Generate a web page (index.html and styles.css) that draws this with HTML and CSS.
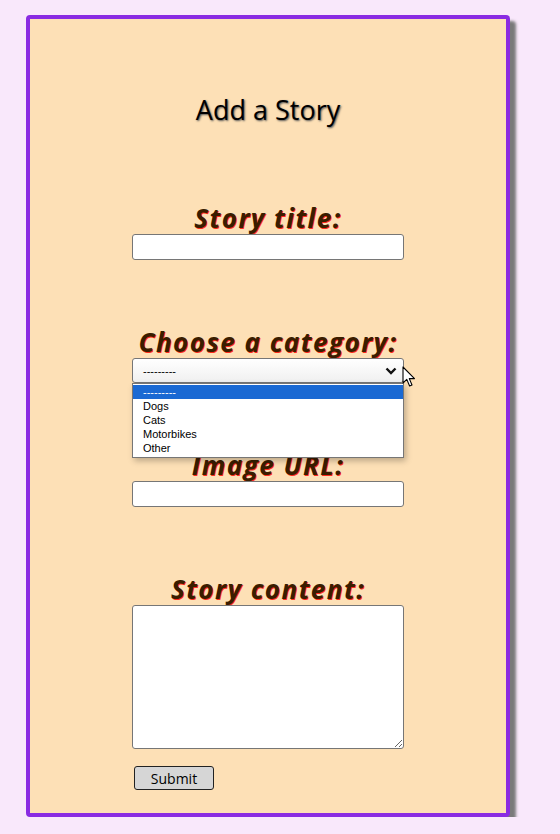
FILE: index.html
```html
<!DOCTYPE html>
<html lang="en">
<head>
<meta charset="utf-8">
<title>Add a Story</title>
<link rel="stylesheet" href="styles.css">
</head>
<body>
<div class="card">
  <h1 class="title">Add a Story</h1>
  <form class="form">
    <div class="field">
      <label class="label" for="t">Story title:</label>
      <input class="input" id="t" type="text">
    </div>
    <div class="field">
      <label class="label" for="c">Choose a category:</label>
      <div class="select-wrap">
        <div class="select" id="c">
          <span class="select-text">---------</span>
          <svg class="chev" width="12" height="8" viewBox="0 0 12 8"><path d="M1.5 1.5 L6 6 L10.5 1.5" fill="none" stroke="#111" stroke-width="2.4"/></svg>
        </div>
        <ul class="dropdown">
          <li class="opt opt-active">---------</li>
          <li class="opt">Dogs</li>
          <li class="opt">Cats</li>
          <li class="opt">Motorbikes</li>
          <li class="opt">Other</li>
        </ul>
        <svg class="cursor" width="14" height="22" viewBox="0 0 14 22"><path d="M1 1 L1 17 L4.8 13.4 L7.6 20 L10 19 L7.3 12.6 L12.5 12.6 Z" fill="#fff" stroke="#000" stroke-width="1.1" stroke-linejoin="round"/></svg>
      </div>
    </div>
    <div class="field">
      <label class="label" for="u">Image URL:</label>
      <input class="input" id="u" type="text">
    </div>
    <div class="field">
      <label class="label" for="s">Story content:</label>
      <textarea class="textarea" id="s"></textarea>
    </div>
    <div class="actions">
      <button class="btn" type="button">Submit</button>
    </div>
  </form>
</div>
</body>
</html>
```
FILE: styles.css
```css
html, body {
  margin: 0;
  padding: 0;
}
body {
  background: #f9e8fb;
  font-family: "Liberation Sans", Arial, sans-serif;
}
.card {
  box-sizing: border-box;
  width: 484px;
  margin: 15px 0 0 26px;
  border: 4px solid #8a2be2;
  border-radius: 4px;
  background: #fde0b6;
  box-shadow: 6px 6px 3px #7a7a7a;
  padding: 75px 0 23px 0;
}
.title {
  margin: 0;
  text-align: center;
  font-family: "Open Sans", sans-serif;
  font-weight: 500;
  font-size: 27px;
  line-height: 31px;
  color: #000;
  text-shadow: 1px 1px 2px #555;
}
.form {
  display: flex;
  flex-direction: column;
  align-items: center;
  margin-top: 79px;
  gap: 68px;
}
.field {
  display: flex;
  flex-direction: column;
  align-items: center;
  width: 272px;
}
.label {
  display: block;
  white-space: nowrap;
  font-family: "Open Sans", sans-serif;
  font-style: italic;
  font-weight: 700;
  font-size: 26px;
  line-height: 28px;
  margin-bottom: 2px;
  letter-spacing: 1.5px;
  color: #3a1d00;
  text-shadow: 1px 1px 0 #ff2a1a;
}
.input {
  box-sizing: border-box;
  width: 272px;
  height: 26px;
  margin: 0;
  border: 1px solid #767676;
  border-radius: 3px;
  background: #fff;
  padding: 1px 2px;
}
.select-wrap {
  position: relative;
  width: 272px;
}
.select {
  box-sizing: border-box;
  width: 272px;
  height: 25px;
  display: flex;
  align-items: center;
  justify-content: space-between;
  padding: 0 6px 0 10px;
  border: 1px solid #767676;
  border-radius: 3px;
  background: linear-gradient(#ffffff, #f0f0f0);
  font-size: 11px;
  color: #000;
}
.chev {
  display: block;
}
.dropdown {
  position: absolute;
  left: 0;
  top: 25px;
  box-sizing: border-box;
  width: 272px;
  margin: 0;
  padding: 1px 0 2px 0;
  list-style: none;
  background: #fff;
  border: 1px solid #767676;
  box-shadow: 2px 3px 6px rgba(0, 0, 0, 0.25);
  z-index: 2;
}
.opt {
  height: 14px;
  line-height: 14px;
  padding-left: 10px;
  font-size: 11px;
  color: #000;
}
.opt-active {
  background: #1a69d3;
  color: #fff;
}
.cursor {
  position: absolute;
  left: 270px;
  top: 8px;
  z-index: 3;
}
.textarea {
  display: block;
  box-sizing: border-box;
  width: 272px;
  height: 144px;
  margin: 0;
  border: 1px solid #767676;
  border-radius: 3px;
  background: #fff;
  resize: vertical;
}
.actions {
  width: 272px;
  margin-top: -51px;
}
.btn {
  box-sizing: border-box;
  width: 80px;
  height: 24px;
  margin-left: 2px;
  padding: 0;
  border: 1px solid #222;
  border-radius: 3px;
  background: #d6d6d6;
  font-family: "Open Sans", sans-serif;
  font-size: 14px;
  color: #000;
}
```
